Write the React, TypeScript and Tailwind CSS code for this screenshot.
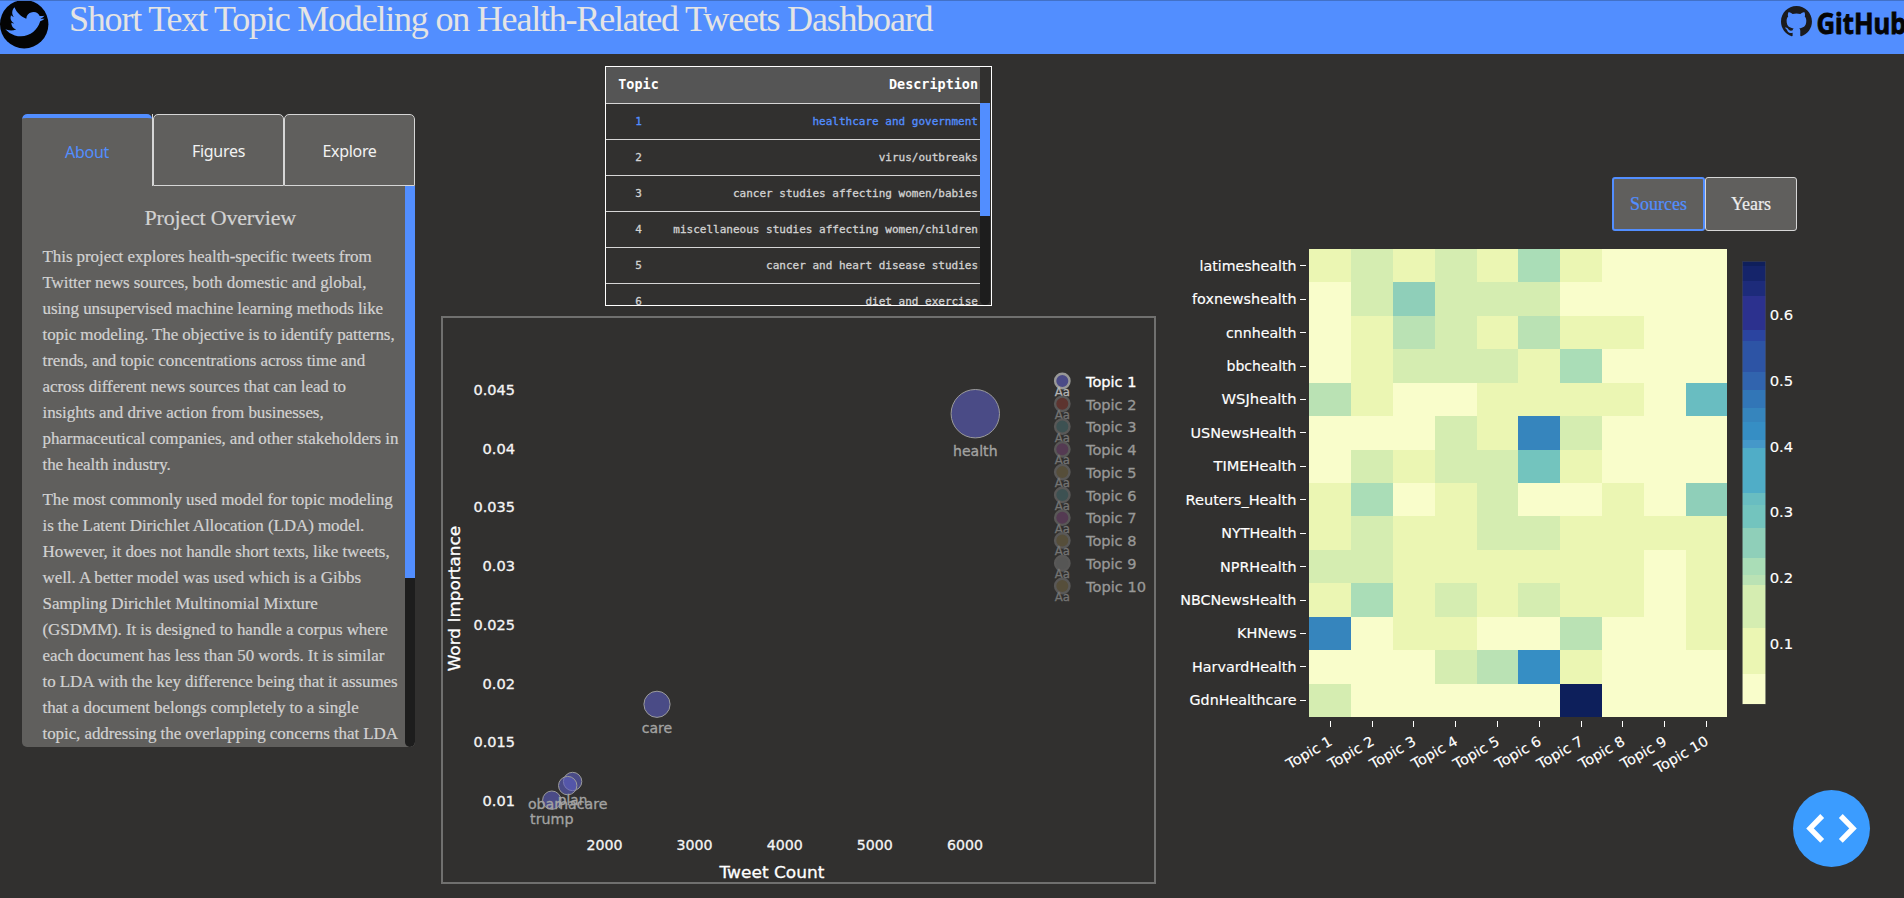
import React from "react";

const ABOUT_PARAGRAPHS: string[][] = [
  [
    "This project explores health-specific tweets from",
    "Twitter news sources, both domestic and global,",
    "using unsupervised machine learning methods like",
    "topic modeling. The objective is to identify patterns,",
    "trends, and topic concentrations across time and",
    "across different news sources that can lead to",
    "insights and drive action from businesses,",
    "pharmaceutical companies, and other stakeholders in",
    "the health industry.",
  ],
  [
    "The most commonly used model for topic modeling",
    "is the Latent Dirichlet Allocation (LDA) model.",
    "However, it does not handle short texts, like tweets,",
    "well. A better model was used which is a Gibbs",
    "Sampling Dirichlet Multinomial Mixture",
    "(GSDMM). It is designed to handle a corpus where",
    "each document has less than 50 words. It is similar",
    "to LDA with the key difference being that it assumes",
    "that a document belongs completely to a single",
    "topic, addressing the overlapping concerns that LDA",
  ],
];

const TOPICS = [
  "healthcare and government",
  "virus/outbreaks",
  "cancer studies affecting women/babies",
  "miscellaneous studies affecting women/children",
  "cancer and heart disease studies",
  "diet and exercise",
];

function Header() {
  return (
    <header className="flex h-[54px] items-start overflow-hidden border-t border-[#4271c8] bg-[#528eff]">
      <svg className="-mt-px h-[49px] w-[49px] shrink-0" viewBox="0 0 49 49">
        <circle cx="24.2" cy="24.2" r="24.2" fill="#040404" />
        <g transform="translate(25.2 24.2) rotate(17) scale(1.44) translate(-12.2 -12.2)">
          <path
            fill="#528eff"
            d="M23.953 4.57a10 10 0 01-2.825.775 4.958 4.958 0 002.163-2.723c-.951.555-2.005.959-3.127 1.184a4.92 4.92 0 00-8.384 4.482C7.69 8.095 4.067 6.13 1.64 3.162a4.822 4.822 0 00-.666 2.475c0 1.71.87 3.213 2.188 4.096a4.904 4.904 0 01-2.228-.616v.06a4.923 4.923 0 003.946 4.827 4.996 4.996 0 01-2.212.085 4.936 4.936 0 004.604 3.417 9.867 9.867 0 01-6.102 2.105c-.39 0-.779-.023-1.17-.067a13.995 13.995 0 007.557 2.209c9.053 0 13.998-7.496 13.998-13.985 0-.21 0-.42-.015-.63A9.935 9.935 0 0024 4.59z"
          />
        </g>
      </svg>
      <h1 className="ml-[20px] whitespace-nowrap text-[36px] leading-[37px] tracking-[-1.2px] text-[#e4e4e4]">
        Short Text Topic Modeling on Health-Related Tweets Dashboard
      </h1>
      <svg className="ml-auto h-[48px] w-[124px] shrink-0" viewBox="0 0 124 48">
        <g transform="translate(1 4.6) scale(1.29)">
          <path
            fill="#1b1b1d"
            d="M12 .297c-6.63 0-12 5.373-12 12 0 5.303 3.438 9.8 8.205 11.385.6.113.82-.258.82-.577 0-.285-.01-1.04-.015-2.04-3.338.724-4.042-1.61-4.042-1.61C4.422 18.07 3.633 17.7 3.633 17.7c-1.087-.744.084-.729.084-.729 1.205.084 1.838 1.236 1.838 1.236 1.07 1.835 2.809 1.305 3.495.998.108-.776.417-1.305.76-1.605-2.665-.3-5.466-1.332-5.466-5.93 0-1.31.465-2.38 1.235-3.22-.135-.303-.54-1.523.105-3.176 0 0 1.005-.322 3.3 1.23.96-.267 1.98-.399 3-.405 1.02.006 2.04.138 3 .405 2.28-1.552 3.285-1.23 3.285-1.23.645 1.653.24 2.873.12 3.176.765.84 1.23 1.91 1.23 3.22 0 4.61-2.805 5.625-5.475 5.92.42.36.81 1.096.81 2.22 0 1.606-.015 2.896-.015 3.286 0 .315.21.69.825.57C20.565 22.092 24 17.592 24 12.297c0-6.627-5.373-12-12-12"
          />
        </g>
        <text
          x="36.5"
          y="32.8"
          className="font-['Noto_Sans',sans-serif] font-bold"
          fontSize="29"
          fill="#050505"
          stroke="#050505"
          strokeWidth="0.8"
          textLength="90"
          lengthAdjust="spacingAndGlyphs"
        >
          GitHub
        </text>
      </svg>
    </header>
  );
}

function AboutPanel() {
  const tab =
    "flex items-center justify-center rounded-t-[5px] border border-[#d6d6d6] pt-[2px] text-[#f2f2f2]";
  return (
    <section className="ml-[22px] mt-[60px] flex h-[633px] w-[393px] shrink-0 flex-col overflow-hidden rounded-[5px] bg-[#605f5d]">
      <nav className="flex h-[72px] shrink-0 bg-[#31302f] font-['Noto_Sans',sans-serif] text-[16px] tracking-[-0.3px]">
        <div className="flex w-[130px] items-center justify-center rounded-t-[5px] border-t-4 border-[#528eff] bg-[#605f5d] text-[#528eff]">
          About
        </div>
        <div className="w-px bg-[#d6d6d6]" />
        <div className={tab + " w-[131px] bg-[#605f5d]"}>Figures</div>
        <div className={tab + " w-[131px] bg-[#605f5d]"}>Explore</div>
      </nav>
      <div className="flex min-h-0 flex-1">
        <div className="w-[383px] shrink-0 overflow-hidden pl-[20.5px] text-[#d2d2d2] [-webkit-text-stroke:0.2px]">
          <h2 className="mt-[15px] pr-[7px] text-center text-[22px] leading-[34px] tracking-[-0.2px]">
            Project Overview
          </h2>
          <div className="mt-[9px] text-[17px] leading-[26px] tracking-[-0.075px]">
            {ABOUT_PARAGRAPHS.map((lines, p) => (
              <p key={p} className="mb-[9px]">
                {lines.map((line) => (
                  <span key={line} className="block whitespace-nowrap">
                    {line}
                  </span>
                ))}
              </p>
            ))}
          </div>
        </div>
        <div className="w-[10px] rounded-b-[5px] bg-[#1d1d1d]">
          <div className="h-[392px] bg-[#528eff]" />
        </div>
      </div>
    </section>
  );
}

function TopicTable() {
  return (
    <div className="mx-auto flex h-[240px] w-[387px] overflow-hidden border border-white font-['DejaVu_Sans_Mono',monospace]">
      <div className="w-[374px] shrink-0">
        <div className="flex h-[37px] items-center border-b border-[#d6d6d6] bg-[#555555] text-[13.44px] font-bold text-white">
          <span className="w-[65px] text-center">Topic</span>
          <span className="flex-1 pr-[2px] text-right">Description</span>
        </div>
        {TOPICS.map((topic, i) => (
          <div
            key={topic}
            className={
              "flex h-[36px] items-center border-b border-[#d6d6d6] pt-[2px] text-[11px] [-webkit-text-stroke:0.3px] " +
              (i === 0 ? "text-[#528eff]" : "text-[#d2d2d2]")
            }
          >
            <span className="w-[65px] text-center">{i + 1}</span>
            <span className="flex-1 whitespace-nowrap pr-[2px] text-right">{topic}</span>
          </div>
        ))}
      </div>
      <div className="mt-[36px] w-[10px] rounded-b-[5px] bg-[#1d1d1d]">
        <div className="h-[113px] bg-[#528eff]" />
      </div>
    </div>
  );
}

type LabelProps = {
  x: number;
  y: number;
  text: string;
  width: number;
  anchor?: "start" | "middle" | "end";
  fill?: string;
  size?: number;
  weight?: number;
  transform?: string;
};

function Label({
  x,
  y,
  text,
  width,
  anchor = "middle",
  fill = "#f5f5f5",
  size = 14,
  weight = 0.3,
  transform,
}: LabelProps) {
  return (
    <text
      x={x}
      y={y}
      fontSize={size}
      fill={fill}
      stroke={fill}
      strokeWidth={weight}
      textAnchor={anchor}
      textLength={width}
      lengthAdjust="spacingAndGlyphs"
      transform={transform}
    >
      {text}
    </text>
  );
}

const Y_TICKS = ["0.045", "0.04", "0.035", "0.03", "0.025", "0.02", "0.015", "0.01"];
const X_TICKS = ["2000", "3000", "4000", "5000", "6000"];
const BUBBLES = [
  { word: "health", x: 975.3, y: 413.7, r: 24.2, ly: 456, w: 44.5 },
  { word: "care", x: 657, y: 704.3, r: 13.1, ly: 733, w: 30.5 },
  { word: "plan", x: 572.6, y: 781.5, r: 9.2, ly: 805, w: 29.5 },
  { word: "obamacare", x: 567.7, y: 785.6, r: 9.2, ly: 809, w: 79.5 },
  { word: "trump", x: 551.8, y: 800.2, r: 9.2, ly: 823.5, w: 43.5 },
];
const LEGEND_COLORS = [
  "#4b4b87",
  "#5d342f",
  "#3d5152",
  "#543a52",
  "#564e3a",
  "#3d5152",
  "#543a52",
  "#564e3a",
  "#565655",
  "#564e3a",
];

function BubbleChart() {
  return (
    <div className="mt-[10px] h-[568px] w-[715px] border-2 border-[#70706f]">
      <svg
        className="block h-full w-full font-['DejaVu_Sans',sans-serif]"
        viewBox="443 318 711 564"
      >
        {Y_TICKS.map((t, i) => (
          <Label key={t} x={515} y={395 + i * 58.7} text={t} width={t.length === 5 ? 41.5 : 32.5} anchor="end" />
        ))}
        {X_TICKS.map((t, i) => (
          <Label key={t} x={604.4 + i * 90.15} y={850.3} text={t} width={36} />
        ))}
        <Label x={772} y={878.3} text="Tweet Count" width={105} size={16.5} fill="#ffffff" />
        <Label
          x={0}
          y={0}
          text="Word Importance"
          width={145.5}
          size={16.5}
          fill="#ffffff"
          transform="translate(459.6 598.6) rotate(-90)"
        />
        {BUBBLES.map((b) => (
          <circle
            key={b.word}
            cx={b.x}
            cy={b.y}
            r={b.r}
            fill="#5c5ec2"
            fillOpacity="0.6"
            stroke="#9b9b9b"
            strokeWidth="1"
          />
        ))}
        {BUBBLES.map((b) => (
          <Label key={b.word} x={b.x} y={b.ly} text={b.word} width={b.w} fill="#a3a3a2" />
        ))}
        {LEGEND_COLORS.map((c, i) => {
          const cy = 381 + i * 22.78;
          return (
            <g key={i}>
              <circle cx="1062.3" cy={cy} r="7.2" fill={c} stroke={i === 0 ? "#989897" : "#595857"} strokeWidth="2.4" />
              <Label x={1062.3} y={cy + 15} text="Aa" width={15.2} size={12} fill={i === 0 ? "#b4b4b4" : "#747473"} />
              <Label
                x={1086}
                y={cy + 5.8}
                text={"Topic " + (i + 1)}
                width={i === 9 ? 60 : 50.5}
                anchor="start"
                fill={i === 0 ? "#ffffff" : "#989897"}
              />
            </g>
          );
        })}
      </svg>
    </div>
  );
}

const CELL_COLORS: Record<string, string> = {
  "0": "#f9fdcb",
  "1": "#ebf6b3",
  "2": "#d5edb1",
  "3": "#bae2b4",
  "4": "#aaddb7",
  "5": "#8fcfb9",
  "6": "#73c4be",
  "7": "#69bdc1",
  "8": "#3685bd",
  "9": "#368ec4",
  A: "#0d1f5b",
};
const SOURCES: { name: string; cells: string; w: number }[] = [
  { name: "latimeshealth", cells: "1212141000", w: 97 },
  { name: "foxnewshealth", cells: "0252220000", w: 104.5 },
  { name: "cnnhealth", cells: "0132131100", w: 70.5 },
  { name: "bbchealth", cells: "0122214000", w: 70 },
  { name: "WSJhealth", cells: "3100111107", w: 75 },
  { name: "USNewsHealth", cells: "0002182000", w: 106 },
  { name: "TIMEHealth", cells: "0212261000", w: 83 },
  { name: "Reuters_Health", cells: "1401200105", w: 111 },
  { name: "NYTHealth", cells: "1211221111", w: 75.3 },
  { name: "NPRHealth", cells: "2211111101", w: 76.5 },
  { name: "NBCNewsHealth", cells: "1412121101", w: 116.3 },
  { name: "KHNews", cells: "8011003001", w: 59.5 },
  { name: "HarvardHealth", cells: "0002391000", w: 104.5 },
  { name: "GdnHealthcare", cells: "200000A000", w: 107 },
];
const BANDS: [number, string][] = [
  [261, "#0f1f5b"],
  [265.5, "#15246a"],
  [281, "#1d2b7a"],
  [296, "#2c318e"],
  [330, "#2b44a0"],
  [341, "#2d54a5"],
  [372, "#3164ae"],
  [390, "#3276b7"],
  [408, "#3685bd"],
  [421.5, "#368ec4"],
  [439.5, "#4598c9"],
  [448, "#50adc7"],
  [493, "#69bdc1"],
  [505, "#73c4be"],
  [528, "#8fcfb9"],
  [558, "#aaddb7"],
  [574.5, "#bae2b4"],
  [585, "#d5edb1"],
  [628, "#ebf6b3"],
  [673.5, "#f9fdcb"],
  [704.3, ""],
];
const LEFT = 1309.4;
const COL = 41.8;
const ROW = 468 / 14;

function Heatmap() {
  return (
    <svg
      className="block h-[667px] w-[748px] font-['DejaVu_Sans',sans-serif]"
      viewBox="1156 231 748 667"
    >
      <g shapeRendering="crispEdges">
        {SOURCES.map((s, r) =>
          s.cells.split("").map((c, i) => (
            <rect
              key={s.name + i}
              x={LEFT + i * COL}
              y={249 + r * ROW}
              width={COL}
              height={ROW}
              fill={CELL_COLORS[c]}
            />
          ))
        )}
        {BANDS.slice(0, -1).map(([y, c], i) => (
          <rect key={y} x="1742" width="24" y={y} height={BANDS[i + 1][0] - y} fill={c} />
        ))}
        {SOURCES.map((s, r) => (
          <rect key={s.name} x="1300" width="6" y={Math.round(249 + (r + 0.5) * ROW - 0.5)} height="1" fill="#ffffff" />
        ))}
        {Array.from({ length: 10 }, (_, i) => (
          <rect key={i} x={Math.round(LEFT + (i + 0.5) * COL - 0.5)} width="1" y="721" height="6" fill="#ffffff" />
        ))}
      </g>
      <rect x="1742.5" y="261.5" width="23" height="443" fill="none" stroke="#444444" strokeOpacity="0.6" />
      {SOURCES.map((s, r) => (
        <Label
          key={s.name}
          x={1296.5}
          y={249 + (r + 0.5) * ROW + 5}
          text={s.name}
          width={s.w}
          anchor="end"
          fill="#ffffff"
          weight={0.15}
        />
      ))}
      {Array.from({ length: 10 }, (_, i) => (
        <Label
          key={i}
          x={0}
          y={0}
          text={"Topic " + (i + 1)}
          width={i === 9 ? 59.5 : 50.5}
          anchor="end"
          fill="#ffffff"
          weight={0.15}
          transform={`translate(${1333.4 + i * COL} 744) rotate(-30)`}
        />
      ))}
      {["0.6", "0.5", "0.4", "0.3", "0.2", "0.1"].map((t, i) => (
        <Label
          key={t}
          x={1769.7}
          y={320 + i * 65.8}
          text={t}
          width={23.5}
          anchor="start"
          fill="#ffffff"
          weight={0.15}
        />
      ))}
    </svg>
  );
}

export default function App() {
  return (
    <div className="relative h-[898px] w-[1904px] overflow-hidden bg-[#31302f] font-['Liberation_Serif',serif]">
      <Header />
      <main className="flex h-[844px] items-start">
        <AboutPanel />
        <section className="ml-[26px] w-[715px] shrink-0 pt-[12px]">
          <TopicTable />
          <BubbleChart />
        </section>
        <section className="w-[748px] shrink-0 pt-[123px]">
          <div className="ml-[456px] flex h-[54px] text-[18px] [-webkit-text-stroke:0.2px]">
            <button className="w-[93px] rounded-[3px] border-2 border-[#528eff] bg-[#605f5d] text-[#528eff]">
              Sources
            </button>
            <button className="w-[92px] rounded-[3px] border border-[#d6d6d6] bg-[#605f5d] pt-px text-[#ededed]">
              Years
            </button>
          </div>
          <Heatmap />
        </section>
      </main>
      <button className="absolute bottom-[31px] right-[34px] h-[77px] w-[77px] rounded-full bg-[#3b9cff]">
        <svg viewBox="0 0 77 77" fill="none" stroke="#ffffff" strokeWidth="5.4">
          <path d="M29.2 26 L17 38.4 L29.2 50.8" />
          <path d="M47.8 26 L60 38.4 L47.8 50.8" />
        </svg>
      </button>
    </div>
  );
}
